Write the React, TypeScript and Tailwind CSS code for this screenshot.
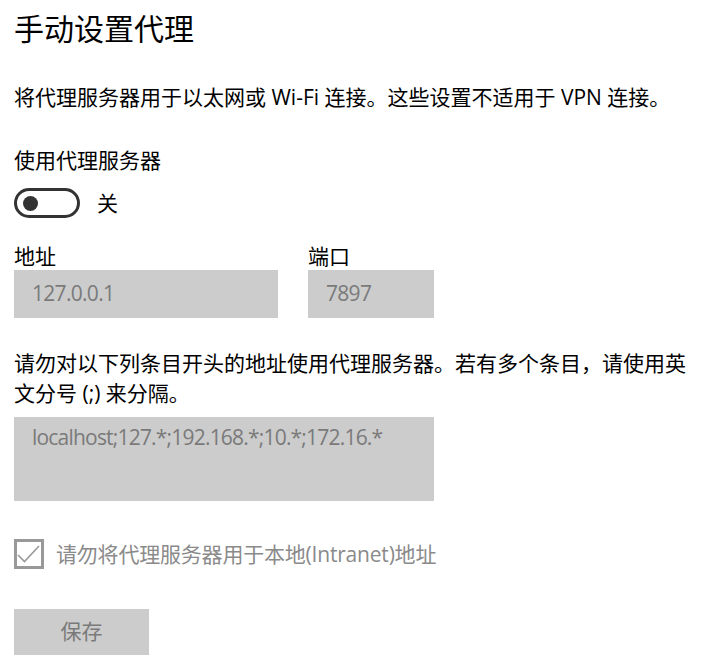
import React from "react";

const font = {
  fontFamily: '"Open Sans", "Noto Sans CJK SC", sans-serif',
};

export default function App() {
  return (
    <div className="min-h-screen bg-white text-black pl-[14px] pt-[9px]" style={font}>
      <div className="w-[682px]">
        {/* Title */}
        <h1 className="text-[30px] leading-[40px] font-normal">手动设置代理</h1>

        <p className="mt-[33px] text-[21px] leading-[30px]">
          将代理服务器用于以太网或 Wi-Fi 连接。这些设置不适用于 VPN 连接。
        </p>

        {/* Toggle */}
        <p className="mt-[33px] text-[21px] leading-[30px]">使用代理服务器</p>
        <div className="mt-[13px] flex items-center gap-[17px]">
          <div className="w-[66px] h-[30px] rounded-full border-[3px] border-[#333] flex items-center pl-[6px]">
            <div className="w-[15px] h-[15px] rounded-full bg-[#333]" />
          </div>
          <span className="text-[21px] leading-[30px]">关</span>
        </div>

        {/* Address / port */}
        <div className="mt-[24px] flex gap-[30px]">
          <div className="flex flex-col">
            <span className="text-[21px] leading-[28px]">地址</span>
            <div className="w-[264px] h-[48px] bg-[#cccccc] flex items-center pl-[18px] text-[21px] tracking-[-0.7px] text-[#7a7a7a]">
              127.0.0.1
            </div>
          </div>
          <div className="flex flex-col">
            <span className="text-[21px] leading-[28px]">端口</span>
            <div className="w-[126px] h-[48px] bg-[#cccccc] flex items-center pl-[18px] text-[21px] tracking-[-0.7px] text-[#7a7a7a]">
              7897
            </div>
          </div>
        </div>

        {/* Bypass list */}
        <p className="mt-[30px] text-[21px] leading-[30px]">
          请勿对以下列条目开头的地址使用代理服务器。若有多个条目，请使用英文分号 (;) 来分隔。
        </p>
        <div className="mt-[9px] w-[420px] h-[84px] bg-[#cccccc] pl-[18px] pt-[5px] text-[21px] leading-[30px] tracking-[-0.8px] text-[#7a7a7a]">
          localhost;127.*;192.168.*;10.*;172.16.*
        </div>

        {/* Checkbox */}
        <div className="mt-[38px] flex items-center gap-[12px]">
          <div className="w-[30px] h-[30px] border-[3px] border-[#999] flex items-center justify-center">
            <svg width="24" height="24" viewBox="0 0 24 24" fill="none">
              <polyline points="1,13 7.5,19.5 22,4" stroke="#999" strokeWidth="1.6" />
            </svg>
          </div>
          <span className="text-[21px] leading-[30px] tracking-[-0.2px] text-[#8a8a8a]">
            请勿将代理服务器用于本地(Intranet)地址
          </span>
        </div>

        {/* Save */}
        <button className="mt-[40px] w-[135px] h-[46px] bg-[#cccccc] text-[21px] text-[#7a7a7a] flex items-center justify-center">
          保存
        </button>
      </div>
    </div>
  );
}
